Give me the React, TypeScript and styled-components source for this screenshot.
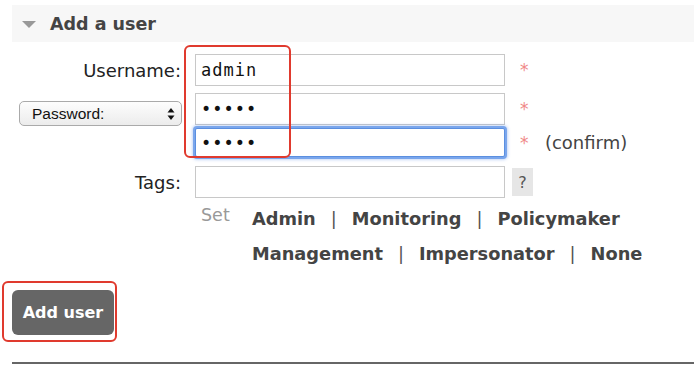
import styled, { createGlobalStyle } from "styled-components";

const GlobalStyle = createGlobalStyle`
  body {
    margin: 0;
    background: #fff;
    font-family: "DejaVu Sans", Verdana, sans-serif;
    color: #333;
  }
`;

export default function App() {
  return (
    <>
      <GlobalStyle />
      <Page>
        <SectionHeader>
          <Arrow />
          <h2>Add a user</h2>
        </SectionHeader>

        <Form>
          <Row space={12}>
            <Label>Username:</Label>
            <TextInput value="admin" readOnly />
            <Mark>*</Mark>
          </Row>

          <Row space={7}>
            <LabelCell>
              <FakeSelect>
                <span>Password:</span>
                <Spinner viewBox="0 0 8 14">
                  <path d="M4 1 L7.5 5.5 H0.5 Z" fill="#111" />
                  <path d="M4 13 L7.5 8.5 H0.5 Z" fill="#111" />
                </Spinner>
              </FakeSelect>
            </LabelCell>
            <TextInput type="password" value="admin" readOnly />
            <Mark>*</Mark>
          </Row>

          <Row space={3}>
            <span />
            <TextInput type="password" value="admin" readOnly focused />
            <Mark>
              * <Note>(confirm)</Note>
            </Mark>
          </Row>

          <Row space={9}>
            <Label>Tags:</Label>
            <TextInput />
            <HelpBox>?</HelpBox>
          </Row>

          <Row space={7}>
            <span />
            <TagSets>
              <SetWord>Set</SetWord>
              <TagLinks>
                <li>Admin</li>
                <li>Monitoring</li>
                <li>Policymaker</li>
                <li>Management</li>
                <li>Impersonator</li>
                <li>None</li>
              </TagLinks>
            </TagSets>
          </Row>
        </Form>

        <SubmitButton>Add user</SubmitButton>
        <Rule />

        <Annotation style={{ left: 184, top: 45, width: 107, height: 113 }} />
        <Annotation style={{ left: 2, top: 281, width: 115, height: 61 }} />
      </Page>
    </>
  );
}

const Page = styled.div`
  position: relative;
  width: 694px;
  height: 367px;
  overflow: hidden;
  padding: 5px 0 0 12px;
  box-sizing: border-box;
`;

const SectionHeader = styled.div`
  display: flex;
  align-items: center;
  height: 37px;
  background: #f7f7f7;
  padding-left: 10px;

  h2 {
    margin: 0 0 0 14px;
    font-size: 17.5px;
    font-weight: 700;
    color: #444;
  }
`;

const Arrow = styled.span`
  width: 0;
  height: 0;
  border-left: 7px solid transparent;
  border-right: 7px solid transparent;
  border-top: 7px solid #999;
  margin-top: 1px;
`;

const Form = styled.div`
  display: flex;
  flex-direction: column;
  margin-left: -12px;
`;

const Row = styled.div<{ space: number }>`
  display: grid;
  grid-template-columns: 195px 310px auto;
  align-items: center;
  margin-top: ${({ space }) => space}px;
`;

const Label = styled.label`
  text-align: right;
  font-size: 18px;
  color: #222;
  padding-right: 14px;
`;

const LabelCell = styled.div`
  display: flex;
  justify-content: flex-end;
  align-self: end;
  padding-right: 13px;
  transform: translateY(1px);
`;

const FakeSelect = styled.div`
  display: flex;
  align-items: center;
  justify-content: space-between;
  width: 163px;
  height: 25px;
  box-sizing: border-box;
  border: 1px solid #aaa;
  border-radius: 5px;
  background: linear-gradient(#fdfdfd, #ececec);
  padding: 0 6px 0 12px;
  font-family: "Liberation Sans", Arial, sans-serif;
  font-size: 15.5px;
  color: #111;
`;

const Spinner = styled.svg`
  width: 8px;
  height: 14px;
`;

const TextInput = styled.input<{ focused?: boolean }>`
  display: block;
  width: 310px;
  height: 32px;
  box-sizing: border-box;
  border: 1px solid #c8c8c8;
  padding: 0 5px;
  font-family: "DejaVu Sans Mono", monospace;
  font-size: 17px;
  color: #111;
  letter-spacing: 1px;
  outline: none;
  background: #fff;
  ${({ focused }) =>
    focused &&
    `
    height: 29px;
    border: 1px solid #5b8fe0;
    box-shadow: 0 0 0 2px #7aa6ec, 0 0 3px 3px rgba(90,140,230,0.35);
    border-radius: 2px;
  `}
`;

const Mark = styled.span`
  color: #f08888;
  font-size: 17px;
  padding-left: 15px;
`;

const Note = styled.span`
  color: #444;
  font-size: 18px;
  margin-left: 11px;
`;

const HelpBox = styled.span`
  justify-self: start;
  margin-left: 7px;
  width: 21px;
  height: 28px;
  background: #e6e6e6;
  color: #555;
  font-size: 16px;
  display: flex;
  align-items: center;
  justify-content: center;
`;

const TagSets = styled.div`
  grid-column: 2 / 4;
  display: flex;
  align-items: flex-start;
  padding-left: 6px;
`;

const SetWord = styled.span`
  color: #999;
  font-size: 17.5px;
  width: 51px;
  flex-shrink: 0;
`;

const TagLinks = styled.ul`
  display: flex;
  flex-wrap: wrap;
  width: 440px;
  margin: 3px 0 0;
  padding: 0;
  list-style: none;
  row-gap: 14px;

  li {
    font-size: 17.8px;
    font-weight: 700;
    color: #444;
  }

  li + li::before {
    content: "|";
    font-weight: 400;
    color: #555;
    margin: 0 15px;
  }

  li:nth-child(4)::before {
    content: none;
  }
`;

const SubmitButton = styled.button`
  display: block;
  margin-top: 26px;
  width: 102px;
  height: 45px;
  border: none;
  border-radius: 6px;
  background: #666;
  color: #fff;
  font-family: "DejaVu Sans", Verdana, sans-serif;
  font-size: 16px;
  font-weight: 700;
`;

const Rule = styled.div`
  margin-top: 27px;
  height: 2px;
  background: #666;
`;

const Annotation = styled.div`
  position: absolute;
  border: 2px solid #e03a2e;
  border-radius: 6px;
  box-sizing: border-box;
  pointer-events: none;
`;
